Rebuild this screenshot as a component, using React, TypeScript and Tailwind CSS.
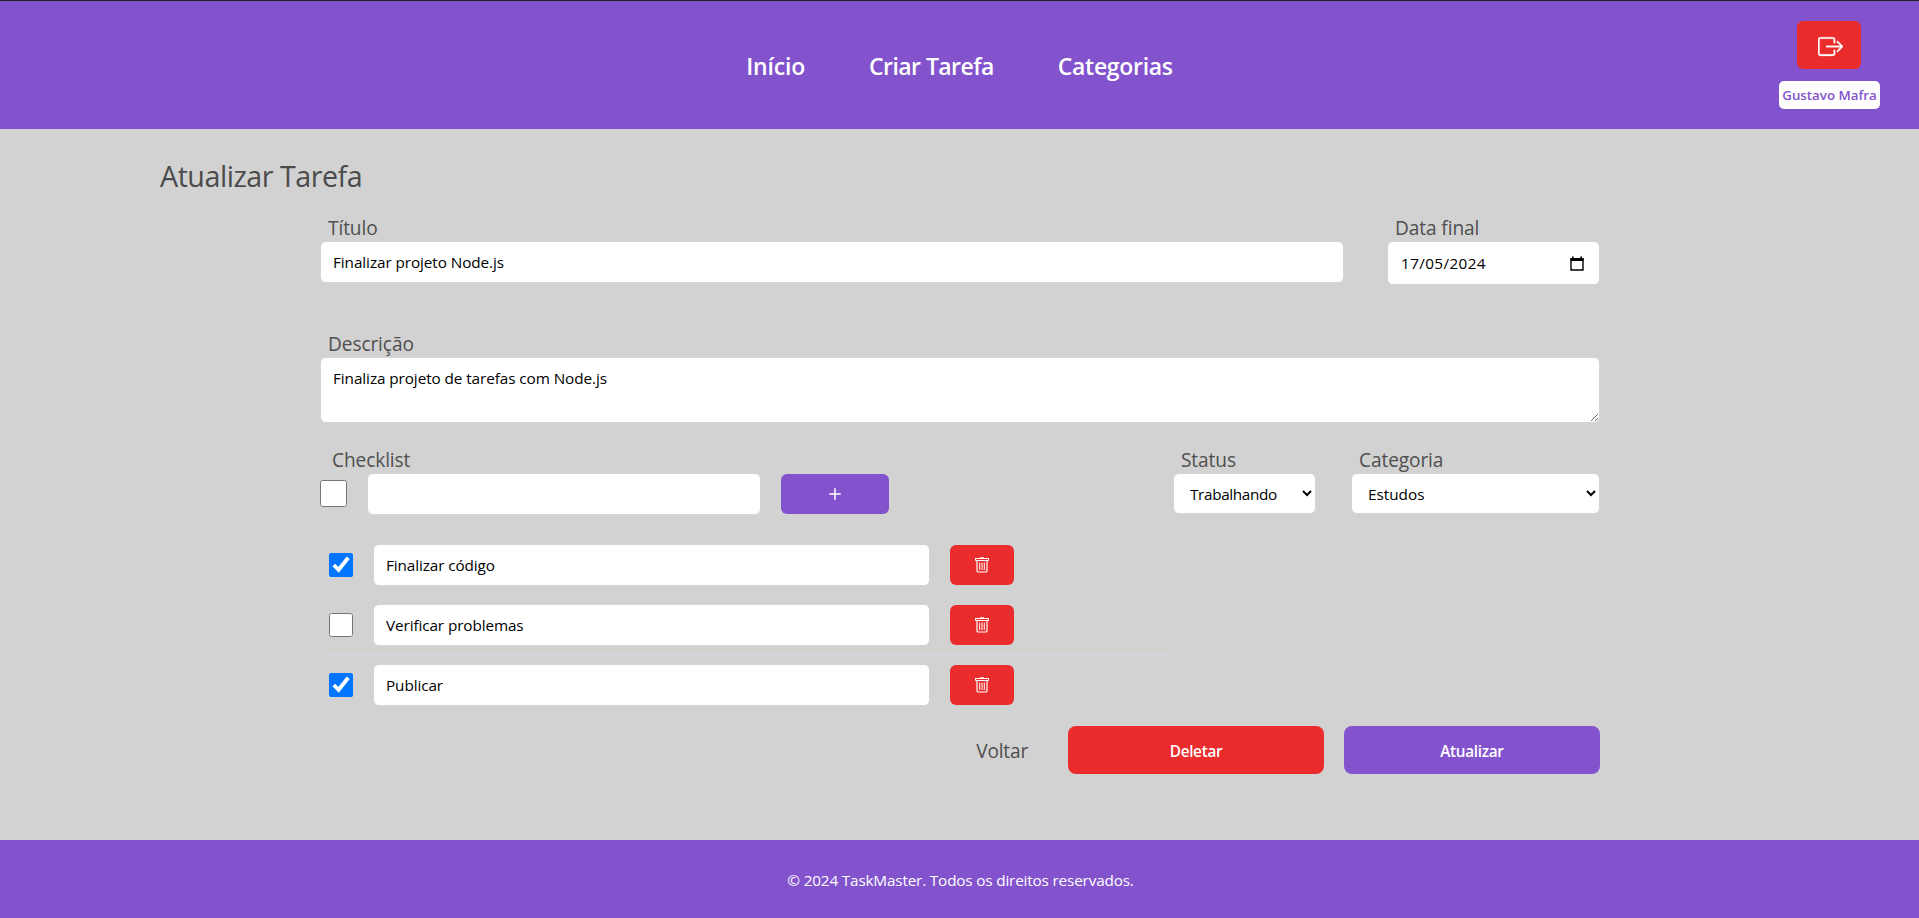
import { useState } from "react";
import { BsBoxArrowRight, BsPlus } from "react-icons/bs";

const field =
  "rounded-md border border-gray-300 bg-white text-[15.3px] text-black outline-none";
const label =
  "block h-[27px] pl-2 text-[19.1px] leading-[28px] tracking-[-0.1px] text-[#4f4f4f]";

const initialItems = [
  { text: "Finalizar código", done: true },
  { text: "Verificar problemas", done: false },
  { text: "Publicar", done: true },
];

function Header() {
  return (
    <header className="flex h-[129px] shrink-0 border-t border-[#202124] bg-[#8353ce] px-5">
      <div className="w-[140px]" />
      <nav className="flex flex-1 items-center justify-center gap-16 pt-0.5 text-[23px] font-semibold text-white">
        <a href="#" className="tracking-[-0.2px]">Início</a>
        <a href="#" className="tracking-[-0.55px]">Criar Tarefa</a>
        <a href="#" className="tracking-[-0.3px]">Categorias</a>
      </nav>
      <div className="flex w-[140px] flex-col items-center pt-5">
        <button className="flex h-12 w-16 items-center justify-center rounded-md bg-[#ea2c2c] text-white">
          <BsBoxArrowRight className="mt-0.5 ml-0.5 size-[25px] stroke-white stroke-[0.2px]" />
        </button>
        <span className="mt-3 flex h-7 w-[101px] items-center justify-center rounded-[5px] bg-white pt-0.5 pl-px text-[13.3px] font-semibold whitespace-nowrap text-[#8353ce]">
          Gustavo Mafra
        </span>
      </div>
    </header>
  );
}

function CalendarIcon() {
  return (
    <svg viewBox="0 0 14 15" className="h-[15px] w-[14px]" fill="none">
      <path d="M1 3h12v11H1z" stroke="#000" strokeWidth="1.4" />
      <path d="M.5 2h13v3H.5zM2 .5h1.6V2H2zM10.4.5H12V2h-1.6z" fill="#000" />
    </svg>
  );
}

function TrashIcon() {
  return (
    <svg viewBox="0 0 14 16" className="h-4 w-[14px]" fill="none" stroke="currentColor">
      <path d="M5 .9h4M.5 3.5v-2h13v2M.5 3.5h13" strokeWidth="1.1" />
      <path d="M2 3.5v10.2q0 1.3 1.3 1.3h7.4q1.3 0 1.3-1.3V3.5" strokeWidth="1.2" />
      <path d="M4.7 5.5v7.5M7 5.5v7.5M9.3 5.5v7.5" />
    </svg>
  );
}

export default function App() {
  const [items, setItems] = useState(initialItems);
  const toggle = (index: number) =>
    setItems(items.map((it, i) => (i === index ? { ...it, done: !it.done } : it)));

  return (
    <div className="flex h-[918px] w-[1919px] flex-col overflow-hidden bg-[#d2d2d2] font-['Open_Sans','Noto_Sans',sans-serif]">
      <Header />
      <main className="h-[711px] shrink-0 pt-[27px] pl-40">
        <h1 className="h-[58px] text-[28.7px] leading-[40px] tracking-[-0.5px] text-[#4b4b4b]">
          Atualizar Tarefa
        </h1>
        <form className="ml-40 w-[1280px]" onSubmit={(e) => e.preventDefault()}>
          <div className="flex h-[116px] justify-between">
            <div className="w-[1024px]">
              <label className={label}>Título</label>
              <input
                className={`${field} h-[42px] w-full px-3 tracking-[-0.08px]`}
                defaultValue="Finalizar projeto Node.js"
              />
            </div>
            <div className="w-[213px]">
              <label className={label}>Data final</label>
              <div className={`${field} flex h-11 items-center justify-between pr-[15px] pl-[13px]`}>
                <span className="tracking-[0.38px]">17/05/2024</span>
                <CalendarIcon />
              </div>
            </div>
          </div>
          <label className={label}>Descrição</label>
          <textarea
            className={`${field} block h-[66px] w-full px-3 pt-[9px] pb-2 tracking-[-0.08px]`}
            defaultValue="Finaliza projeto de tarefas com Node.js"
          />
          <div className="mt-[23px] flex h-[89px]">
            <div className="w-[853px]">
              <label className={`${label} pl-3`}>Checklist</label>
              <div className="flex items-center">
                <input type="checkbox" className="mb-px size-[27px]" />
                <input className={`${field} ml-5 h-[42px] w-[394px] px-3`} />
                <button className="ml-5 flex h-10 w-[108px] items-center justify-center rounded-md bg-[#8353ce] text-white">
                  <BsPlus className="size-6" />
                </button>
              </div>
            </div>
            <div className="w-[143px]">
              <label className={label}>Status</label>
              <select className={`${field} h-[41px] w-full px-3 tracking-[-0.35px]`}>
                <option>Trabalhando</option>
              </select>
            </div>
            <div className="ml-[35px] w-[249px]">
              <label className={label}>Categoria</label>
              <select className={`${field} h-[41px] w-full px-3`}>
                <option>Estudos</option>
              </select>
            </div>
          </div>
          <ul className="h-[176px] w-[853px] overflow-hidden">
            {items.map((item, i) => (
              <li
                key={item.text}
                className="flex h-[60px] items-center rounded-md border border-gray-300 pl-2"
              >
                <input
                  type="checkbox"
                  className="size-6"
                  checked={item.done}
                  onChange={() => toggle(i)}
                />
                <input
                  className={`${field} ml-5 h-[42px] w-[557px] px-3 tracking-[-0.1px]`}
                  defaultValue={item.text}
                />
                <button className="ml-5 flex h-10 w-16 items-center justify-center rounded-md bg-[#ea2c2c] text-white">
                  <TrashIcon />
                </button>
              </li>
            ))}
          </ul>
          <div className="mt-[15px] flex items-center justify-end gap-5">
            <a href="#" className="mr-5 pt-0.5 text-[19.1px] tracking-[-0.2px] text-[#4f4f4f]">
              Voltar
            </a>
            <button className="h-12 w-64 rounded-lg bg-[#ea2c2c] pt-0.5 text-[15.3px] font-semibold tracking-[-0.3px] text-white">
              Deletar
            </button>
            <button className="h-12 w-64 rounded-lg bg-[#8353ce] pt-0.5 text-[15.3px] font-semibold tracking-[-0.3px] text-white">
              Atualizar
            </button>
          </div>
        </form>
      </main>
      <footer className="flex flex-1 items-center justify-center bg-[#8353ce] pt-[2px] pl-0.5 text-[15.3px] tracking-[-0.17px] text-white">
        © 2024 TaskMaster. Todos os direitos reservados.
      </footer>
    </div>
  );
}
